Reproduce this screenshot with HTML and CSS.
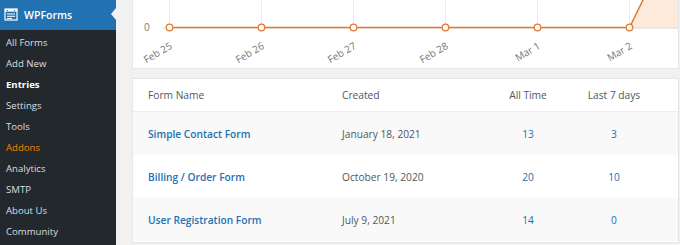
FILE: index.html
```html
<!DOCTYPE html>
<html>
<head>
    <title>WPForms Entries</title>
    <link rel="stylesheet" href="styles.css">
</head>
<body>
<div class="layout">
    <div class="sidebar">
        <div class="brand">
            <svg class="brand-icon" width="14" height="13" viewBox="0 0 14 13">
                <rect x="1" y="1" width="12" height="11" fill="none" stroke="#fff" stroke-width="1.2"/>
                <rect x="1" y="1" width="12" height="2.6" fill="#fff"/>
                <rect x="3" y="2" width="1" height="1" fill="#2271b1"/>
                <rect x="10" y="2" width="1" height="1" fill="#2271b1"/>
                <rect x="3" y="5.5" width="8" height="1" fill="#fff"/>
                <rect x="3" y="7.8" width="8" height="1" fill="#fff"/>
                <rect x="3" y="10" width="5" height="1" fill="#fff"/>
            </svg>
            <span>WPForms</span>
            <div class="notch"></div>
        </div>
        <ul class="menu">
            <li>All Forms</li>
            <li>Add New</li>
            <li class="current">Entries</li>
            <li>Settings</li>
            <li>Tools</li>
            <li class="addons">Addons</li>
            <li>Analytics</li>
            <li>SMTP</li>
            <li>About Us</li>
            <li>Community</li>
        </ul>
    </div>

    <div class="main">
        <div class="card chart-card">
            <svg width="546" height="68" viewBox="0 0 546 68">
                <g stroke="#ececec" stroke-width="1">
                    <line x1="37.5" y1="0" x2="37.5" y2="27"/>
                    <line x1="129.5" y1="0" x2="129.5" y2="27"/>
                    <line x1="221.5" y1="0" x2="221.5" y2="27"/>
                    <line x1="313.5" y1="0" x2="313.5" y2="27"/>
                    <line x1="405.5" y1="0" x2="405.5" y2="27"/>
                    <line x1="497.5" y1="0" x2="497.5" y2="27"/>
                </g>
                <polygon points="497.5,27.5 511,0 546,0 546,28 497.5,28" fill="#fdeadb"/>
                <line x1="30" y1="28" x2="546" y2="28" stroke="#d9d9d9" stroke-width="1"/>
                <polyline points="37.5,27.5 497.5,27.5 511,0" fill="none" stroke="#e27730" stroke-width="1.5"/>
                <g fill="#fff" stroke="#e27730" stroke-width="1.2">
                    <circle cx="37.5" cy="27.5" r="3.3"/>
                    <circle cx="129.5" cy="27.5" r="3.3"/>
                    <circle cx="221.5" cy="27.5" r="3.3"/>
                    <circle cx="313.5" cy="27.5" r="3.3"/>
                    <circle cx="405.5" cy="27.5" r="3.3"/>
                    <circle cx="497.5" cy="27.5" r="3.3"/>
                </g>
                <text x="12" y="31" class="axis">0</text>
                <g class="axis" text-anchor="end">
                    <text x="41" y="48" transform="rotate(-30 41 48)">Feb 25</text>
                    <text x="133" y="48" transform="rotate(-30 133 48)">Feb 26</text>
                    <text x="225" y="48" transform="rotate(-30 225 48)">Feb 27</text>
                    <text x="317" y="48" transform="rotate(-30 317 48)">Feb 28</text>
                    <text x="409" y="48" transform="rotate(-30 409 48)">Mar 1</text>
                    <text x="501" y="48" transform="rotate(-30 501 48)">Mar 2</text>
                </g>
            </svg>
        </div>

        <div class="card table-card">
            <table class="forms">
                <colgroup>
                    <col style="width: 194px">
                    <col style="width: 150px">
                    <col style="width: 102px">
                    <col style="width: 70px">
                    <col>
                </colgroup>
                <thead>
                    <tr>
                        <th>Form Name</th>
                        <th>Created</th>
                        <th class="num">All Time</th>
                        <th class="num">Last 7 days</th>
                        <th></th>
                    </tr>
                </thead>
                <tbody>
                    <tr>
                        <td><a href="#">Simple Contact Form</a></td>
                        <td>January 18, 2021</td>
                        <td class="num"><a href="#">13</a></td>
                        <td class="num"><a href="#">3</a></td>
                        <td></td>
                    </tr>
                    <tr>
                        <td><a href="#">Billing / Order Form</a></td>
                        <td>October 19, 2020</td>
                        <td class="num"><a href="#">20</a></td>
                        <td class="num"><a href="#">10</a></td>
                        <td></td>
                    </tr>
                    <tr>
                        <td><a href="#">User Registration Form</a></td>
                        <td>July 9, 2021</td>
                        <td class="num"><a href="#">14</a></td>
                        <td class="num"><a href="#">0</a></td>
                        <td></td>
                    </tr>
                </tbody>
            </table>
        </div>
    </div>
</div>
</body>
</html>
```

FILE: styles.css
```css
body {
    margin: 0;
    background-color: #f1f1f1;
    font-family: "Open Sans", "Noto Sans", sans-serif;
}

.layout {
    display: flex;
    height: 245px;
    overflow: hidden;
}

.sidebar {
    width: 116px;
    flex-shrink: 0;
    background-color: #23282d;
}

.brand {
    position: relative;
    display: flex;
    align-items: center;
    gap: 6px;
    height: 30px;
    padding-left: 4px;
    background-color: #2271b1;
    color: #fff;
    font-size: 10.5px;
    font-weight: 600;
}

.brand-icon {
    margin-top: -1px;
}

.notch {
    position: absolute;
    right: 0;
    top: 8px;
    width: 0;
    height: 0;
    border-top: 6px solid transparent;
    border-bottom: 6px solid transparent;
    border-right: 5px solid #f1f1f1;
}

.menu {
    list-style: none;
    margin: 0;
    padding: 2px 0 0;
}

.menu li {
    height: 21px;
    line-height: 21px;
    padding-left: 6px;
    font-size: 9.6px;
    color: #dcdee0;
}

.menu li.current {
    color: #fff;
    font-weight: 700;
}

.menu li.addons {
    color: #f18500;
}

.main {
    flex: 1;
    padding: 0 2px 0 16px;
    display: flex;
    flex-direction: column;
    gap: 9px;
}

.card {
    background-color: #fff;
    border: 1px solid #e6e6e6;
}

.chart-card {
    height: 68px;
    border-top: none;
    overflow: hidden;
}

.chart-card svg {
    display: block;
    margin-left: -1px;
}

.axis {
    font-family: "Open Sans", sans-serif;
    font-size: 10px;
    fill: #777;
}

.table-card {
    height: 163px;
}

.forms {
    width: 100%;
    border-collapse: collapse;
    table-layout: fixed;
    font-size: 10.2px;
    color: #50575e;
}

.forms th {
    height: 32px;
    padding: 0 0 0 15px;
    text-align: left;
    font-weight: 400;
    color: #50575e;
    border-bottom: 1px solid #eeeeee;
}

.forms td {
    height: 43px;
    padding: 0 0 0 15px;
}

.forms th.num,
.forms td.num {
    padding: 0;
    text-align: center;
}

.forms tbody tr:nth-child(odd) {
    background-color: #f9f9f9;
}

.forms a {
    color: #2271b1;
    text-decoration: none;
}

.forms td:first-child a {
    font-weight: 600;
}
```
